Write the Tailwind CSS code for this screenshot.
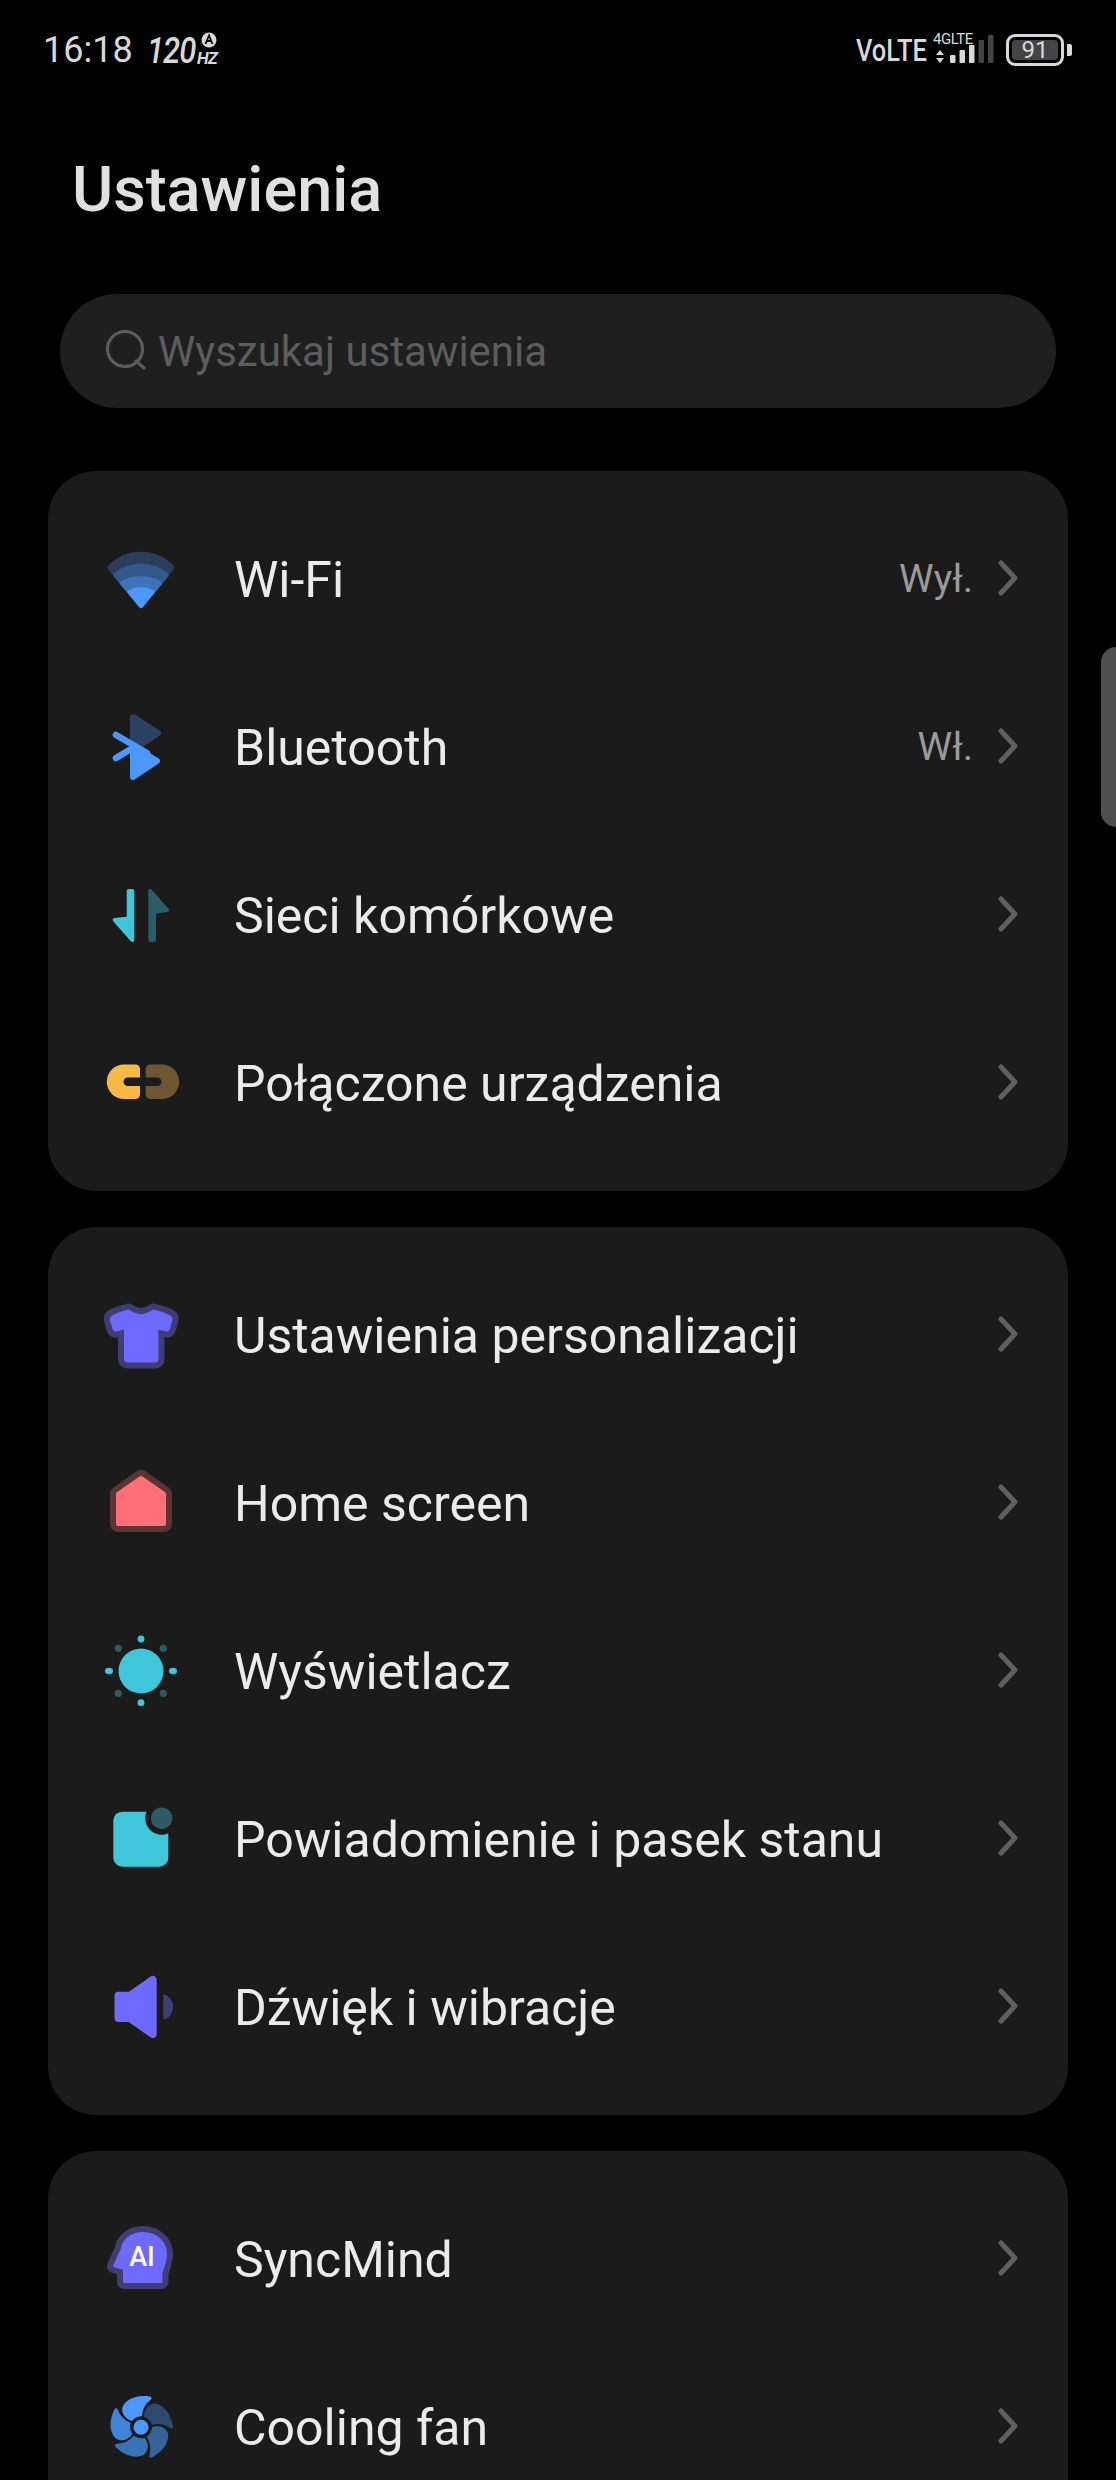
<!DOCTYPE html>
<html lang="pl">
<head>
<meta charset="utf-8">
<script src="https://cdn.jsdelivr.net/npm/@tailwindcss/browser@4"></script>
<title>Ustawienia</title>
</head>
<body class="bg-black">
<div class="relative w-[1116px] h-[2480px] overflow-hidden bg-black font-['Roboto',sans-serif]">

  <!-- status bar -->
  <div class="flex items-center justify-between h-[100px] pl-[43px] pr-[44px] text-[#d8d8d8]">
    <div class="flex items-center gap-[16px]">
      <span class="w-[88px] text-[36px] font-normal leading-none">16:18</span>
      <div class="relative w-[72px] h-[36px]">
        <span class="absolute left-0 top-[1px] text-[31px] leading-[36px] italic font-medium tracking-[-1px] scale-y-[1.2]">120</span>
        <span class="absolute left-[50px] top-[16px] text-[17px] leading-[20px] italic font-bold tracking-[-1px]">HZ</span>
        <svg class="absolute left-[54px] top-0" width="16" height="16" viewBox="0 0 16 16"><circle cx="8" cy="8" r="7.500" fill="#d8d8d8"/><path d="M4.500 12 8 3.500l3.500 8.500M6 9h4" fill="none" stroke="#000" stroke-width="1.800"/></svg>
      </div>
    </div>
    <div class="flex items-center">
      <span class="w-[77px] text-[31px] font-medium leading-none scale-x-[0.82] origin-left">VoLTE</span>
      <div class="relative w-[66px] h-[36px]">
        <span class="absolute left-0 top-0 text-[15px] leading-[15px] tracking-[-0.5px]">4GLTE</span>
        <svg class="absolute left-0 top-0" width="66" height="36" viewBox="0 0 66 36">
          <path d="M3 23l4-5 4 5zM3 26l4 5 4-5z" fill="#d8d8d8"/>
          <rect x="17" y="23" width="5.500" height="8" rx="1" fill="#d8d8d8"/>
          <rect x="26.500" y="18" width="5.500" height="13" rx="1" fill="#d8d8d8"/>
          <rect x="36" y="13" width="5.500" height="18" rx="1" fill="#d8d8d8"/>
          <rect x="45.500" y="8" width="5.500" height="23" rx="1" fill="#444"/>
          <rect x="55" y="3" width="5.500" height="28" rx="1" fill="#444"/>
        </svg>
      </div>
      <div class="relative ml-[7px] w-[58px] h-[32px] rounded-[9px] border-[3px] border-[#d8d8d8] p-[3px]">
        <div class="flex items-center justify-center w-full h-full rounded-[4px] bg-[#444] text-[24px] leading-none font-normal">91</div>
      </div>
      <div class="ml-[3px] w-[5px] h-[12px] rounded-r-[2px] bg-[#d8d8d8]"></div>
    </div>
  </div>

  <!-- title -->
  <h1 class="mt-[55px] ml-[72px] text-[63px] leading-[70px] font-medium text-[#e0e0e0]">Ustawienia</h1>

  <!-- search -->
  <div class="mt-[69px] mx-[60px] h-[114px] rounded-full bg-[#1f1f1f] flex items-center pl-[44px] gap-[8px]">
    <svg width="46" height="46" viewBox="0 0 46 46" fill="none" stroke="#5c5c5c" stroke-width="3.200" stroke-linecap="round"><circle cx="21" cy="21" r="17.500"/><path d="M32 33l8 7"/></svg>
    <span class="mt-[2px] text-[42px] leading-none text-[#5d5d5d]">Wyszukaj ustawienia</span>
  </div>

  <!-- card 1 -->
  <div class="mt-[63px] mx-[48px] rounded-[48px] bg-[#1b1b1b] pt-[23px] pb-[25px] flex flex-col">
    <div class="h-[168px] flex items-center pl-[53px] pr-[49px]">
      <svg class="w-[80px] h-[80px] shrink-0" viewBox="0 0 80 80" stroke-linejoin="round" stroke-width="5">
        <path d="M40 68 9 29.500A43 43 0 0 1 71 29.500Z" fill="#2a3f5c" stroke="#2a3f5c"/>
        <path d="M40 68 14 37A40 40 0 0 1 66 37Z" fill="#33588c" stroke="#33588c" stroke-width="4"/>
        <path d="M40 68 21 45A40 40 0 0 1 59 45Z" fill="#3d73b8" stroke="#3d73b8" stroke-width="4"/>
        <path d="M40 68 28.500 54A25 25 0 0 1 51.500 54Z" fill="#4c98ff" stroke="#4c98ff" stroke-width="4"/>
      </svg>
      <span class="ml-[53px] mt-[3px] text-[50px] leading-none text-[#ebebeb]">Wi-Fi</span>
      <span class="ml-auto mt-[2px] text-[39px] leading-none text-[#9a9a9a]">Wył.</span>
      <svg class="ml-[22px] shrink-0" width="24" height="40" viewBox="0 0 24 40" fill="none" stroke="#5f5f5f" stroke-width="5" stroke-linecap="round" stroke-linejoin="round"><path d="M6 5l14 15L6 35"/></svg>
    </div>
    <div class="h-[168px] flex items-center pl-[53px] pr-[49px]">
      <svg class="w-[80px] h-[80px] shrink-0" viewBox="0 0 80 80" stroke-linejoin="round" stroke-linecap="round">
        <path d="M32 11 57 27 32 44Z" fill="#2b4262" stroke="#2b4262" stroke-width="6"/>
        <path d="M32 40 56 55 32 71Z" fill="#4c98ff" stroke="#4c98ff" stroke-width="6"/>
        <path d="M15 29 46 47M15 52 30 43" fill="none" stroke="#4c98ff" stroke-width="6.500"/>
      </svg>
      <span class="ml-[53px] mt-[3px] text-[50px] leading-none text-[#ebebeb]">Bluetooth</span>
      <span class="ml-auto mt-[2px] text-[39px] leading-none text-[#9a9a9a]">Wł.</span>
      <svg class="ml-[22px] shrink-0" width="24" height="40" viewBox="0 0 24 40" fill="none" stroke="#5f5f5f" stroke-width="5" stroke-linecap="round" stroke-linejoin="round"><path d="M6 5l14 15L6 35"/></svg>
    </div>
    <div class="h-[168px] flex items-center pl-[53px] pr-[49px]">
      <svg class="w-[80px] h-[80px] shrink-0" viewBox="0 0 80 80" stroke-linejoin="round" stroke-width="4">
        <path d="M27.700 17H31.300V66L13.700 46 27.700 44.500Z" fill="#3fc4d9" stroke="#3fc4d9"/>
        <path d="M49.300 17V66H53V38L66 36Z" fill="#2c5c68" stroke="#2c5c68"/>
      </svg>
      <span class="ml-[53px] mt-[3px] text-[50px] leading-none text-[#ebebeb]">Sieci komórkowe</span>
      <svg class="ml-auto shrink-0" width="24" height="40" viewBox="0 0 24 40" fill="none" stroke="#5f5f5f" stroke-width="5" stroke-linecap="round" stroke-linejoin="round"><path d="M6 5l14 15L6 35"/></svg>
    </div>
    <div class="h-[168px] flex items-center pl-[53px] pr-[49px]">
      <svg class="w-[80px] h-[80px] shrink-0" viewBox="0 0 80 80">
        <path d="M23 22.500H34Q39 22.500 39 27.500V52Q39 57 34 57H23A17.250 17.250 0 0 1 23 22.500Z" fill="#f7b844"/>
        <path d="M61 22.500H50Q44.700 22.500 44.700 27.500V52Q44.700 57 50 57H61A17.250 17.250 0 0 0 61 22.500Z" fill="#6d5732"/>
        <rect x="22.500" y="35.500" width="38" height="8.500" rx="4.250" fill="#1b1b1b"/>
      </svg>
      <span class="ml-[53px] mt-[3px] text-[50px] leading-none text-[#ebebeb]">Połączone urządzenia</span>
      <svg class="ml-auto shrink-0" width="24" height="40" viewBox="0 0 24 40" fill="none" stroke="#5f5f5f" stroke-width="5" stroke-linecap="round" stroke-linejoin="round"><path d="M6 5l14 15L6 35"/></svg>
    </div>
  </div>

  <!-- card 2 -->
  <div class="mt-[36px] mx-[48px] rounded-[48px] bg-[#1b1b1b] pt-[23px] pb-[25px] flex flex-col">
    <div class="h-[168px] flex items-center pl-[53px] pr-[49px]">
      <svg class="w-[80px] h-[80px] shrink-0" viewBox="0 0 80 80" stroke-linejoin="round">
        <path d="M40 21Q34 20 27.500 16Q18 18 11 22Q9 23 9.500 26L12 35Q12.500 37.500 15 37L23.500 35V65Q23.500 68 26.500 68H54Q57 68 57 65V35L65.500 37Q68 37.500 68.500 35L71 26Q71.500 23 69.500 22Q62 18 52.500 16Q46 20 40 21Z" fill="#3f3e73" stroke="#3f3e73" stroke-width="13"/>
        <path d="M40 21Q34 20 27.500 16Q18 18 11 22Q9 23 9.500 26L12 35Q12.500 37.500 15 37L23.500 35V65Q23.500 68 26.500 68H54Q57 68 57 65V35L65.500 37Q68 37.500 68.500 35L71 26Q71.500 23 69.500 22Q62 18 52.500 16Q46 20 40 21Z" fill="#6e69ff" stroke="#6e69ff" stroke-width="1"/>
      </svg>
      <span class="ml-[53px] mt-[3px] text-[50px] leading-none text-[#ebebeb]">Ustawienia personalizacji</span>
      <svg class="ml-auto shrink-0" width="24" height="40" viewBox="0 0 24 40" fill="none" stroke="#5f5f5f" stroke-width="5" stroke-linecap="round" stroke-linejoin="round"><path d="M6 5l14 15L6 35"/></svg>
    </div>
    <div class="h-[168px] flex items-center pl-[53px] pr-[49px]">
      <svg class="w-[80px] h-[80px] shrink-0" viewBox="0 0 80 80" stroke-linejoin="round">
        <path d="M40 16 17 32V62H63V32Z" fill="#5e3336" stroke="#5e3336" stroke-width="16"/>
        <path d="M40 16 17 32V62H63V32Z" fill="#ff6f75" stroke="#ff6f75" stroke-width="4"/>
      </svg>
      <span class="ml-[53px] mt-[3px] text-[50px] leading-none text-[#ebebeb]">Home screen</span>
      <svg class="ml-auto shrink-0" width="24" height="40" viewBox="0 0 24 40" fill="none" stroke="#5f5f5f" stroke-width="5" stroke-linecap="round" stroke-linejoin="round"><path d="M6 5l14 15L6 35"/></svg>
    </div>
    <div class="h-[168px] flex items-center pl-[53px] pr-[49px]">
      <svg class="w-[80px] h-[80px] shrink-0" viewBox="0 0 80 80">
        <circle cx="40" cy="41" r="22.500" fill="#40c6da"/>
        <circle cx="40" cy="9" r="3.400" fill="#40c6da"/>
        <circle cx="40" cy="72.700" r="3.400" fill="#40c6da"/>
        <ellipse cx="8" cy="41" rx="4" ry="3.300" fill="#40c6da"/>
        <ellipse cx="72" cy="41" rx="4" ry="3.300" fill="#40c6da"/>
        <circle cx="17.300" cy="18.300" r="3.600" fill="#305a62"/>
        <circle cx="62.300" cy="18.300" r="3.600" fill="#305a62"/>
        <circle cx="17.300" cy="63.300" r="3.600" fill="#305a62"/>
        <circle cx="62.300" cy="63.300" r="3.600" fill="#305a62"/>
      </svg>
      <span class="ml-[53px] mt-[3px] text-[50px] leading-none text-[#ebebeb]">Wyświetlacz</span>
      <svg class="ml-auto shrink-0" width="24" height="40" viewBox="0 0 24 40" fill="none" stroke="#5f5f5f" stroke-width="5" stroke-linecap="round" stroke-linejoin="round"><path d="M6 5l14 15L6 35"/></svg>
    </div>
    <div class="h-[168px] flex items-center pl-[53px] pr-[49px]">
      <svg class="w-[80px] h-[80px] shrink-0" viewBox="0 0 80 80">
        <rect x="12.300" y="13.700" width="55" height="55" rx="9" fill="#40c6da"/>
        <circle cx="60.700" cy="20.300" r="16.500" fill="#1b1b1b"/>
        <circle cx="60.700" cy="20.300" r="10.700" fill="#305a62"/>
      </svg>
      <span class="ml-[53px] mt-[3px] text-[50px] leading-none text-[#ebebeb]">Powiadomienie i pasek stanu</span>
      <svg class="ml-auto shrink-0" width="24" height="40" viewBox="0 0 24 40" fill="none" stroke="#5f5f5f" stroke-width="5" stroke-linecap="round" stroke-linejoin="round"><path d="M6 5l14 15L6 35"/></svg>
    </div>
    <div class="h-[168px] flex items-center pl-[53px] pr-[49px]">
      <svg class="w-[80px] h-[80px] shrink-0" viewBox="0 0 80 80" stroke-linejoin="round">
        <path d="M17.500 29.700H29L51.700 14V68L29 52H17.500Z" fill="#6e69ff" stroke="#6e69ff" stroke-width="8"/>
        <path d="M62.300 28A13.500 13.500 0 0 1 62.300 54Z" fill="#3f3e73"/>
      </svg>
      <span class="ml-[53px] mt-[3px] text-[50px] leading-none text-[#ebebeb]">Dźwięk i wibracje</span>
      <svg class="ml-auto shrink-0" width="24" height="40" viewBox="0 0 24 40" fill="none" stroke="#5f5f5f" stroke-width="5" stroke-linecap="round" stroke-linejoin="round"><path d="M6 5l14 15L6 35"/></svg>
    </div>
  </div>

  <!-- card 3 -->
  <div class="mt-[36px] mx-[48px] rounded-[48px] bg-[#1b1b1b] pt-[23px] pb-[25px] flex flex-col">
    <div class="h-[168px] flex items-center pl-[53px] pr-[49px]">
      <svg class="w-[80px] h-[80px] shrink-0" viewBox="0 0 80 80" stroke-linejoin="round">
        <path d="M42 15C30 15 22 22 20.500 32L13 48 23 51V64H60.500V55C63 48 65 42 65 36 65 24 55 15 42 15Z" fill="#3f3e73" stroke="#3f3e73" stroke-width="14"/>
        <path d="M42 15C30 15 22 22 20.500 32L13 48 23 51V64H60.500V55C63 48 65 42 65 36 65 24 55 15 42 15Z" fill="#6e69ff" stroke="#6e69ff" stroke-width="2"/>
        <text x="41" y="48" text-anchor="middle" font-family="Roboto" font-weight="500" font-size="27" fill="#fff">AI</text>
      </svg>
      <span class="ml-[53px] mt-[3px] text-[50px] leading-none text-[#ebebeb]">SyncMind</span>
      <svg class="ml-auto shrink-0" width="24" height="40" viewBox="0 0 24 40" fill="none" stroke="#5f5f5f" stroke-width="5" stroke-linecap="round" stroke-linejoin="round"><path d="M6 5l14 15L6 35"/></svg>
    </div>
    <div class="h-[168px] flex items-center pl-[53px] pr-[49px]">
      <svg class="w-[80px] h-[80px] shrink-0" viewBox="0 0 80 80">
        <circle cx="40" cy="41.300" r="7.500" fill="#4c98ff"/>
        <path d="M31 35C24 33 20 27 21.500 21 25 13 36 8.500 49 10.500 51 11 51 13 49.500 14 44 18 41.500 24 41 30 37 30.500 33 32 31 35Z" fill="#4c98ff"/>
        <path d="M31 35C24 33 20 27 21.500 21 25 13 36 8.500 49 10.500 51 11 51 13 49.500 14 44 18 41.500 24 41 30 37 30.500 33 32 31 35Z" fill="#2c4a70" transform="rotate(72 40 41.300)"/>
        <path d="M31 35C24 33 20 27 21.500 21 25 13 36 8.500 49 10.500 51 11 51 13 49.500 14 44 18 41.500 24 41 30 37 30.500 33 32 31 35Z" fill="#37639a" transform="rotate(144 40 41.300)"/>
        <path d="M31 35C24 33 20 27 21.500 21 25 13 36 8.500 49 10.500 51 11 51 13 49.500 14 44 18 41.500 24 41 30 37 30.500 33 32 31 35Z" fill="#3a72b8" transform="rotate(216 40 41.300)"/>
        <path d="M31 35C24 33 20 27 21.500 21 25 13 36 8.500 49 10.500 51 11 51 13 49.500 14 44 18 41.500 24 41 30 37 30.500 33 32 31 35Z" fill="#4084d8" transform="rotate(288 40 41.300)"/>
      </svg>
      <span class="ml-[53px] mt-[3px] text-[50px] leading-none text-[#ebebeb]">Cooling fan</span>
      <svg class="ml-auto shrink-0" width="24" height="40" viewBox="0 0 24 40" fill="none" stroke="#5f5f5f" stroke-width="5" stroke-linecap="round" stroke-linejoin="round"><path d="M6 5l14 15L6 35"/></svg>
    </div>
  </div>

  <!-- side handle -->
  <div class="absolute right-0 top-[647px] w-[15px] h-[180px] rounded-l-[15px] bg-[#4f4f4f]"></div>
</div>
</body>
</html>
